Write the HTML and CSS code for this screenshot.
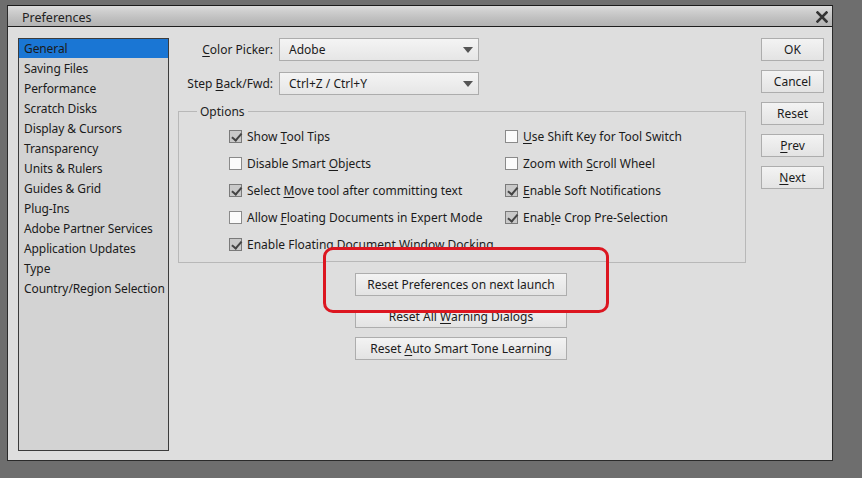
FILE: index.html
```html
<!DOCTYPE html>
<html>
<head>
<meta charset="utf-8">
<title>Preferences</title>
<link rel="stylesheet" href="styles.css">
</head>
<body>
<div class="dialog">
  <div class="titlebar">
    <span class="title">Preferences</span>
    <svg class="close" width="12" height="12" viewBox="0 0 12 12"><path d="M1.5 1.5 L10.5 10.5 M10.5 1.5 L1.5 10.5" stroke="#333" stroke-width="2.6" stroke-linecap="square"/></svg>
  </div>
  <div class="body">
    <ul class="sidebar">
      <li class="sel">General</li>
      <li>Saving Files</li>
      <li>Performance</li>
      <li>Scratch Disks</li>
      <li>Display &amp; Cursors</li>
      <li>Transparency</li>
      <li>Units &amp; Rulers</li>
      <li>Guides &amp; Grid</li>
      <li>Plug-Ins</li>
      <li>Adobe Partner Services</li>
      <li>Application Updates</li>
      <li>Type</li>
      <li>Country/Region Selection</li>
    </ul>
    <div class="main">
      <div class="field">
        <span class="label"><u>C</u>olor Picker:</span>
        <div class="select"><span>Adobe</span><i class="arrow"></i></div>
      </div>
      <div class="field">
        <span class="label">Step <u>B</u>ack/Fwd:</span>
        <div class="select"><span>Ctrl+Z / Ctrl+Y</span><i class="arrow"></i></div>
      </div>
      <fieldset class="group">
        <legend>Options</legend>
        <div class="checks">
          <div class="chk"><i class="box on"></i><span>Show <u>T</u>ool Tips</span></div>
          <div class="chk"><i class="box"></i><span><u>U</u>se Shift Key for Tool Switch</span></div>
          <div class="chk"><i class="box"></i><span>Disable Smart <u>O</u>bjects</span></div>
          <div class="chk"><i class="box"></i><span>Zoom with <u>S</u>croll Wheel</span></div>
          <div class="chk"><i class="box on"></i><span>Select <u>M</u>ove tool after committing text</span></div>
          <div class="chk"><i class="box on"></i><span><u>E</u>nable Soft Notifications</span></div>
          <div class="chk"><i class="box"></i><span>Allow <u>F</u>loating Documents in Expert Mode</span></div>
          <div class="chk"><i class="box on"></i><span>Enab<u>l</u>e Crop Pre-Selection</span></div>
          <div class="chk"><i class="box on"></i><span>Enable Floating Document Window Docking</span></div>
        </div>
      </fieldset>
      <div class="resets">
        <div class="btn wide front"><span>Reset Preferences on next launch</span></div>
        <div class="btn wide"><span>Reset All <u>W</u>arning Dialogs</span></div>
        <div class="btn wide"><span>Reset <u>A</u>uto Smart Tone Learning</span></div>
      </div>
    </div>
    <div class="buttons">
      <div class="btn"><span>OK</span></div>
      <div class="btn"><span>Cancel</span></div>
      <div class="btn"><span>Reset</span></div>
      <div class="btn"><span><u>P</u>rev</span></div>
      <div class="btn"><span><u>N</u>ext</span></div>
    </div>
  </div>
</div>
<div class="highlight"><div class="hl-line"></div></div>
</body>
</html>
```
FILE: styles.css
```css
* { box-sizing: border-box; }
html, body { margin: 0; padding: 0; }
body {
  width: 862px;
  height: 478px;
  background: #6e6e6e;
  font-family: "Noto Sans", "Open Sans", sans-serif;
  font-size: 12px;
  color: #1b1b1b;
  position: relative;
  overflow: hidden;
}
u { text-decoration: underline; text-underline-offset: 2px; }

.dialog {
  margin: 5px 0 0 7px;
  width: 826px;
  height: 456px;
  background: #dedede;
  border: 1px solid #2a2a2a;
  border-top-color: #1a1a1a;
  display: flex;
  flex-direction: column;
}
.titlebar {
  height: 21px;
  flex: none;
  background: linear-gradient(#dadada, #c0c0c0 60%, #b3b3b3);
  border-bottom: 1px solid #1e1e1e;
  display: flex;
  align-items: center;
  justify-content: space-between;
  padding: 2px 4px 0 14px;
}
.title { font-size: 12.5px; color: #222; }
.close { display: block; margin-top: -1px; }

.body {
  display: flex;
  padding: 11px 0 0 10px;
}
.sidebar {
  list-style: none;
  margin: 0;
  padding: 0;
  width: 151px;
  height: 413px;
  background: #d3d3d3;
  border: 1px solid #3c3c3c;
}
.sidebar li {
  height: 20px;
  line-height: 20px;
  padding: 1px 0 0 5px;
  white-space: nowrap;
  letter-spacing: -0.1px;
}
.sidebar li.sel { background: #1a76d4; height: 19px; line-height: 18px; }

.main {
  margin-left: 9px;
  width: 568px;
}
.field {
  display: flex;
  align-items: center;
  height: 23px;
  margin-bottom: 11px;
}
.label {
  width: 95px;
  text-align: right;
  margin-right: 6px;
  white-space: nowrap;
}
.select {
  width: 200px;
  height: 23px;
  border: 1px solid #acacac;
  background: linear-gradient(#f4f4f4, #e6e6e6);
  display: flex;
  align-items: center;
  justify-content: space-between;
  padding: 0 5px 0 9px;
}
.arrow {
  width: 0; height: 0;
  border-left: 5px solid transparent;
  border-right: 5px solid transparent;
  border-top: 6px solid #555;
}

.group {
  margin: -3px 0 0 0;
  padding: 3px 0 4px 0;
  border: 1px solid #b8b8b8;
  height: 160px;
}
.group legend {
  margin-left: 18px;
  padding: 0 3px;
  color: #222;
}
.checks {
  display: grid;
  grid-template-columns: 276px auto;
  grid-auto-rows: 27px;
  padding-left: 50px;
}
.chk {
  display: flex;
  align-items: center;
  white-space: nowrap;
}
.box {
  width: 13px;
  height: 13px;
  border: 1px solid #8a8a8a;
  background: #fbfbfb;
  margin-right: 5px;
  flex: none;
  position: relative;
}
.box.on {
  background: #c9c9c9;
  border-color: #7a7a7a;
}
.box.on::after {
  content: "";
  position: absolute;
  left: 3.5px;
  top: 0px;
  width: 3.5px;
  height: 7.5px;
  border-right: 2px solid #444;
  border-bottom: 2px solid #444;
  transform: rotate(40deg);
}

.resets {
  margin: 10px 0 0 177px;
  display: flex;
  flex-direction: column;
  gap: 9px;
}
.btn {
  height: 23px;
  border: 1px solid #adadad;
  background: linear-gradient(#f3f3f3, #e3e3e3);
  display: flex;
  align-items: center;
  justify-content: center;
  white-space: nowrap;
}
.btn.wide { width: 212px; }
.front { position: relative; z-index: 2; }

.buttons {
  margin-left: 15px;
  display: flex;
  flex-direction: column;
  gap: 9px;
}
.buttons .btn { width: 63px; }

.highlight {
  position: absolute;
  left: 323px;
  top: 247px;
  width: 286px;
  height: 66px;
  border: 3px solid #dc1620;
  border-radius: 10px;
  background: #dedede;
  z-index: 1;
}
.hl-line {
  position: absolute;
  left: 0;
  right: 0;
  top: 11px;
  border-top: 1px solid #b8b8b8;
}
```
